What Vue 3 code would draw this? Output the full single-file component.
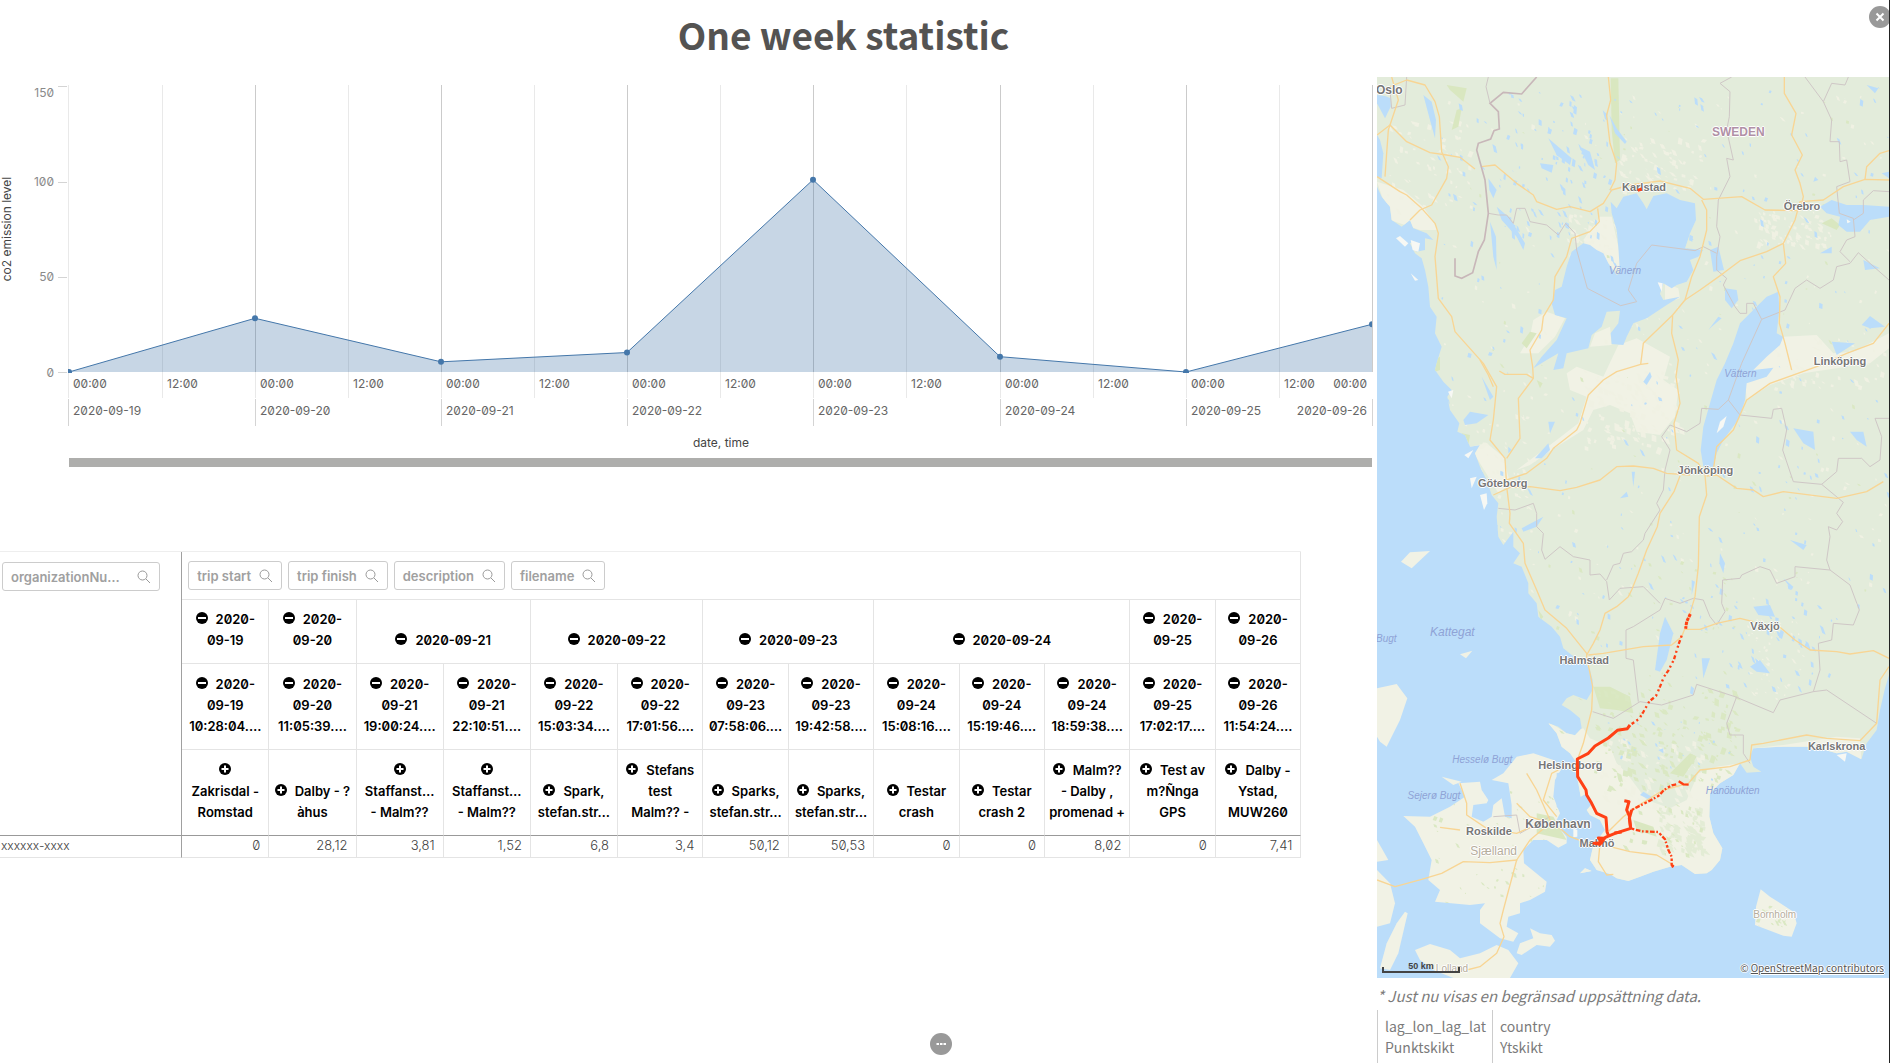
<script setup>
const days = ['19', '20', '21', '22', '23', '24', '25']
const dayX = (i) => (i ? Math.round(69 + i * 186.1) : 68)
const halfX = (i) => 68 + Math.round(i * 186.2 + 93.6)
const valueY = (v) => 295 - v * 1.91
const levels = [0, 28.12, 5.33, 10.2, 100.65, 8.02, 0, 25]
const points = levels.map((v, i) => ({ x: i ? dayX(i) : 69, y: valueY(v) }))
const line = points.map((p) => `${p.x},${p.y}`).join(' ')
const area = `69,295 ${line} 1372,295`
const yTicks = [
  { label: '150', y: 9, text: 20 },
  { label: '100', y: 105, text: 109 },
  { label: '50', y: 200, text: 204 },
  { label: '0', y: 295, text: 300 }
]

const filters = ['trip start', 'trip finish', 'description', 'filename']
const dates = [
  { lines: ['2020-', '09-19'], span: 1 },
  { lines: ['2020-', '09-20'], span: 1 },
  { lines: ['2020-09-21'], span: 2 },
  { lines: ['2020-09-22'], span: 2 },
  { lines: ['2020-09-23'], span: 2 },
  { lines: ['2020-09-24'], span: 3 },
  { lines: ['2020-', '09-25'], span: 1 },
  { lines: ['2020-', '09-26'], span: 1 }
]
const trips = [
  { day: '19', time: '10:28:04', name: ['', 'Zakrisdal -', 'Romstad'], value: '0' },
  { day: '20', time: '11:05:39', name: ['Dalby - ?', 'àhus'], value: '28,12' },
  { day: '21', time: '19:00:24', name: ['', 'Staffanst…', '- Malm??'], value: '3,81' },
  { day: '21', time: '22:10:51', name: ['', 'Staffanst…', '- Malm??'], value: '1,52' },
  { day: '22', time: '15:03:34', name: ['Spark,', 'stefan.str…'], value: '6,8' },
  { day: '22', time: '17:01:56', name: ['Stefans', 'test', 'Malm?? -'], value: '3,4' },
  { day: '23', time: '07:58:06', name: ['Sparks,', 'stefan.str…'], value: '50,12' },
  { day: '23', time: '19:42:58', name: ['Sparks,', 'stefan.str…'], value: '50,53' },
  { day: '24', time: '15:08:16', name: ['Testar', 'crash'], value: '0' },
  { day: '24', time: '15:19:46', name: ['Testar', 'crash 2'], value: '0' },
  { day: '24', time: '18:59:38', name: ['Malm??', '- Dalby ,', 'promenad +'], value: '8,02' },
  { day: '25', time: '17:02:17', name: ['Test av', 'm?Ñnga', 'GPS'], value: '0' },
  { day: '26', time: '11:54:24', name: ['Dalby -', 'Ystad,', 'MUW260'], value: '7,41' }
]

/* Map geometry, in map units of a third of a pixel */
const mainland = '21,21 1557,21 1557,1815 1545,1855 1530,1920 1520,1980 1490,2020 1474,2068 1430,2045 1400,2050 1330,2030 1240,2030 1150,2035 1140,2060 1150,2090 1174,2105 1130,2108 1110,2080 1090,2115 1050,2140 1020,2170 1018,2240 1030,2290 1057,2335 1050,2370 1025,2400 1010,2410 975,2412 935,2385 900,2390 850,2405 810,2420 775,2433 740,2425 720,2412 680,2400 660,2370 668,2335 690,2300 705,2280 690,2250 660,2235 650,2220 668,2200 650,2170 632,2180 625,2140 615,2100 618,2075 600,2050 575,2030 560,1990 535,1960 565,1970 590,1990 615,1996 635,1975 630,1945 600,1920 575,1905 590,1885 610,1875 650,1890 668,1860 668,1830 660,1800 650,1785 605,1755 580,1735 570,1700 545,1670 505,1640 500,1600 475,1570 475,1540 455,1490 430,1480 450,1450 430,1430 430,1385 400,1425 385,1400 380,1340 385,1300 365,1275 350,1230 330,1190 315,1150 330,1125 300,1130 285,1095 262,1085 268,1060 240,1020 232,980 245,960 220,935 195,900 200,880 215,830 195,790 200,740 180,710 175,650 165,600 155,565 135,550 120,520 130,515 140,545 165,540 165,505 190,510 170,490 130,475 120,450 95,470 65,450 60,410 35,380 21,350'
const denmark = [
  '21,1855 80,1842 112,1885 90,1950 50,2030 30,2015 21,2000',
  '100,2238 180,2240 240,2210 285,2180 265,2140 330,2135 335,2160 355,2190 350,2200 310,2205 305,2240 340,2255 365,2240 370,2205 395,2185 405,2240 425,2245 425,2205 415,2140 365,2130 400,2110 440,2060 490,2050 550,2070 575,2095 555,2130 550,2180 570,2230 555,2260 590,2300 590,2320 565,2333 530,2310 490,2310 460,2340 462,2380 530,2435 525,2465 480,2490 450,2500 450,2530 415,2540 410,2570 445,2590 430,2615 390,2605 330,2560 330,2520 345,2500 300,2505 195,2495 210,2460 175,2430 185,2370 160,2320 135,2270',
  '135,2640 180,2622 240,2640 270,2665 330,2650 380,2625 415,2640 445,2680 420,2724 250,2724 190,2700 150,2670',
  '440,2650 450,2620 490,2605 480,2575 510,2590 545,2595 555,2612 540,2630 500,2625 455,2655',
  '21,2310 55,2370 21,2375',
  '21,2400 60,2440 75,2500 60,2560 21,2570',
  '105,2525 113,2530 85,2650 60,2700 30,2695 50,2620 80,2560',
  '1172,2458 1200,2480 1270,2525 1280,2560 1265,2600 1240,2597 1155,2565 1158,2510',
  '93,1475 120,1447 180,1443 125,1495',
  '270,1753 307,1742 288,1765',
  '630,2410 645,2395 665,2403',
  '215,2120 275,2135 250,2145'
]
const cream = [
  '535,1955 590,1990 640,1975 660,2005 720,2030 740,2080 770,2110 830,2190 900,2215 950,2190 985,2110 1040,2090 1110,2080 1100,2450 640,2450 590,2200',
  '745,825 800,805 900,860 880,930 925,960 915,1040 870,1095 800,1085 780,1030 720,1005 670,1020 640,1080 560,1130 480,1185 440,1200 560,1110 625,1060 650,980 600,960 590,910 620,890 700,920',
  '1240,800 1340,795 1390,850 1450,845 1557,790 1557,835 1500,880 1300,910 1200,945 1130,990 1125,930 1160,885',
  '490,750 530,725 585,745 555,800 505,850 450,850 480,800',
  '640,510 690,440 725,440 745,530 755,600 720,600',
  '21,335 100,360 160,410 205,480 150,480 60,450',
  '675,790 720,770 725,825 660,830',
  '300,1130 350,1120 400,1160 420,1240 385,1270 330,1180',
  '885,640 925,655 930,685 885,700',
  '1150,2035 1240,2025 1400,2000 1470,2005 1474,2068 1150,2090'
]
const greens = [
  '260,120 275,115 265,170 245,180', '230,45 290,55 280,95 240,60', '722,25 745,25 750,270 735,280 725,180',
  '1355,460 1385,445 1410,465 1400,480', '190,870 210,860 210,900 195,905', '455,820 480,785 500,790 470,835',
  '670,1850 720,1850 780,1880 790,1930 740,1920 690,1915', '500,2230 550,2240 590,2310 500,2290',
  '790,2250 850,2270 860,2300 800,2280', '900,2110 960,2050 980,2060 940,2120',
  '275,1090 300,1095 295,1125', '500,930 518,940 510,955', '505,1620 520,1640 512,1650'
]
const vanern = '722,395 740,415 760,380 800,370 820,400 830,418 850,378 890,370 930,390 975,400 978,450 960,490 945,535 1000,540 985,560 960,570 970,600 950,635 920,645 905,655 880,640 870,672 880,690 930,680 890,705 830,745 790,760 770,800 760,825 725,822 722,790 745,760 750,722 710,725 695,770 665,795 655,835 590,850 580,895 550,900 565,850 530,870 490,895 515,860 560,810 590,745 555,735 545,700 555,660 575,650 590,590 605,545 640,520 660,525 680,540 700,550 715,580 740,615 750,610 745,530 740,480 725,430'
const vattern = '1225,665 1228,720 1220,790 1240,800 1230,825 1190,860 1150,900 1210,893 1190,920 1130,940 1125,990 1108,1045 1060,1110 1040,1150 1030,1190 1000,1190 992,1140 1000,1070 1020,1000 1040,930 1065,880 1090,820 1110,760 1150,720 1190,680'
const lakes = [
  '21,75 45,78 62,85 62,110 45,145 21,100', '21,195 30,210 40,250 35,325 21,320',
  '160,75 185,95 198,150 195,205 180,150', '1350,410 1385,390 1430,405 1480,405 1557,410 1557,440 1500,450 1470,485 1430,485 1405,465 1410,440 1370,430',
  '535,205 570,235 605,265 600,285 560,255', '510,280 550,285 545,308 515,295', '630,230 660,245 675,300 655,285 640,255',
  '718,135 740,175 770,215 765,222 735,190', '380,410 420,445 465,520 460,540 440,500 395,450', '360,455 378,500 380,600 370,560',
  '355,325 380,360 370,385 358,360', '1020,540 1045,530 1062,600 1030,605', '1065,655 1100,660 1105,690 1085,715 1065,690',
  '1385,815 1455,820 1400,855', '1475,765 1500,738 1545,770 1500,775', '1015,780 1045,740 1055,745 1025,770',
  '1350,550 1385,530 1385,550', '1480,570 1530,595 1485,600', '335,920 370,980 360,990', '280,1050 300,1025 355,1035 320,1060 285,1065',
  '495,1165 535,1120 540,1140 515,1165', '1270,1075 1330,1085 1335,1140 1300,1120', '1440,1085 1480,1085 1490,1130 1460,1110',
  '855,1800 870,1690 885,1640 910,1690 890,1770 870,1805', '1150,1610 1200,1605 1215,1640 1165,1635', '965,1530 975,1535 965,1575',
  '1050,1450 1065,1480 1060,1510 1048,1480', '995,1765 1020,1765 1000,1825', '1140,1790 1170,1770 1200,1810 1160,1805', '1260,1410 1310,1425 1300,1440',
  '455,1375 520,1340 500,1370 460,1385', '820,935 840,905 845,920 830,945', '1490,45 1525,55 1515,70', '415,1130 425,1140 415,1150',
  '820,2165 845,2180 840,2190 810,2175', '865,2040 880,2035 880,2050', '1335,320 1345,330 1330,335', '535,1055 555,1055 540,1090', '785,1205 795,1205 790,1250', '750,1285 770,1265 775,1280',
  '1240,1525 1270,1550 1265,1560', '1535,310 1557,305 1557,325', '560,2110 580,2105 620,2180 615,2270 590,2240 560,2210'
]
const whites = ['1070,1038 1060,1070 1040,1090 1050,1055', '78,505 90,498 115,520 105,530', '122,510 150,520 145,545 128,540', '122,610 145,630 135,632', '283,1155 310,1140 295,1165', '300,1225 320,1220 305,1255', '330,1275 350,1270 352,1300 342,1320', '234,965 250,960 245,985', '610,2275 622,2280 622,2300 610,2302', '1400,2055 1430,2050 1425,2075', '863,637 878,640 875,665', '1430,448 1442,455 1432,460', '738,662 750,665']

/* Small lakes, clearings and woods: a fixed sequence keeps the scatter stable */
let seed = 4711
const rnd = () => {
  seed = (seed * 16807) % 2147483647
  return seed / 2147483647
}
const scatter = (n, x0, y0, x1, y1, size, tall = 1) => {
  let d = ''
  for (let i = 0; i < n; i++) {
    const x = x0 + rnd() * (x1 - x0)
    const y = y0 + rnd() * (y1 - y0)
    const a = size * (0.4 + rnd())
    const b = a * tall * (0.6 + rnd())
    const s = (rnd() * 1.6 - 0.6) * a
    d += `M${x.toFixed(0)} ${y.toFixed(0)}l${a.toFixed(0)} ${(b / 3).toFixed(0)}l${s.toFixed(0)} ${b.toFixed(0)}l${(-a).toFixed(0)} ${(-b / 4).toFixed(0)}z`
  }
  return d
}
const smallLakes = scatter(280, 180, 25, 1550, 1740, 7, 1.4) + scatter(80, 380, 60, 720, 500, 7, 1.7) + scatter(50, 950, 1560, 1400, 1850, 7, 1.5) + scatter(24, 700, 1950, 1100, 2200, 6)
const clearings = scatter(70, 740, 200, 1000, 360, 9) + scatter(80, 1150, 420, 1380, 530, 9) + scatter(120, 640, 900, 930, 1130, 11) + scatter(60, 30, 150, 300, 420, 9) + scatter(60, 250, 1050, 480, 1500, 9) + scatter(220, 200, 60, 1550, 1700, 7) + scatter(60, 590, 430, 740, 560, 9) + scatter(50, 1200, 800, 1557, 960, 9) + scatter(60, 690, 2000, 1000, 2200, 12) + scatter(50, 1130, 1640, 1300, 1900, 6)
const woods = scatter(70, 380, 1450, 1100, 2100, 7) + scatter(150, 670, 1850, 1100, 2160, 11) + scatter(30, 750, 2200, 1000, 2350, 9) + scatter(60, 180, 2160, 560, 2500, 7) + scatter(20, 1160, 2500, 1250, 2570, 7) + scatter(60, 300, 50, 1500, 1600, 6)
const ridge = scatter(100, 860, 2210, 1000, 2340, 12)

const roads = [
  '21,195 60,165 110,215 180,248 230,255 270,262 315,297', '65,21 85,90 55,180 45,320', '60,50 110,30 165,45 195,95 208,140 215,245 235,290 230,325 185,405 150,420 120,450',
  '21,320 90,365 110,375 155,415 195,460 205,490 195,560 205,685 245,740 255,785 295,830 340,880 380,950 370,1050 360,1110 405,1165 410,1250 420,1330 418,1360 460,1420 465,1480 500,1560 525,1620 590,1675 650,1750 650,1760 668,1850 665,1920 640,2020 622,2070',
  '335,290 375,285 440,340 490,375 500,395 560,418 600,410 660,425 700,400 725,360 780,345 870,333 960,355 1000,388 1115,380 1185,420 1290,422 1300,380 1290,340 1275,300 1297,255 1265,195 1278,130 1243,70 1243,21',
  '715,21 722,90 710,135 720,220 740,280 735,330 720,360', '683,415 688,455 660,485 605,505 590,560 555,620 550,690 520,740 515,780 480,840 488,890 490,925 445,985 450,1105 410,1165',
  '995,390 1010,420 1010,480 990,560 965,620 945,690 908,735 905,790 925,870 918,920 930,1000 912,1060 920,1140 985,1180 1005,1215 1010,1275 988,1340 985,1490 975,1580 960,1630 945,1675 935,1700 905,1725 820,1730 700,1750 655,1755',
  '945,690 990,660 1060,610 1110,572 1190,545 1240,520 1275,450 1290,395 1360,390 1420,350 1485,328 1557,330', '1485,328 1490,290 1530,250 1557,242', '1240,520 1247,580 1210,620 1230,680 1228,760 1245,820 1265,900',
  '908,735 820,820 812,883 740,905 700,930 655,975 630,1060 620,1080 550,1135 530,1165 470,1210 410,1230', '812,883 835,880', '1557,760 1510,820 1430,850 1340,890 1200,940 1130,990 1090,1080 1040,1130 1030,1200',
  '370,1275 420,1252 480,1250 570,1262 620,1252 690,1230 740,1190 790,1188 850,1195 890,1210 960,1215', '930,1218 912,1265 870,1330 862,1370 830,1440 805,1510 785,1560 775,1580 740,1610 705,1630 690,1680 670,1720 650,1755',
  '1010,1218 1040,1215 1100,1255 1150,1260 1180,1280 1240,1265 1400,1285 1490,1265 1540,1235', '945,1678 990,1678 1040,1660 1110,1645 1150,1655', '1230,1672 1275,1710 1320,1740 1400,1745 1440,1752 1510,1742 1557,1765',
  '955,2140 990,2100 1080,2090 1140,2070 1145,2025 1180,2020 1310,1995 1370,2005 1470,2012 1520,1960 1530,1830 1557,1790', '710,2290 760,2240 800,2210 880,2160 955,2140',
  '720,2330 780,2345 860,2355 910,2385', '690,2320 685,2375 710,2415 730,2413', '690,2320 640,2315 600,2300 540,2250 500,2160 470,2110', '560,2240 520,2190 545,2110 565,2100', '540,2260 480,2240 440,2200', '270,2140 290,2200 290,2235 350,2275 440,2290 530,2250', '210,2272 270,2280',
  '21,2430 75,2450 155,2428 215,2410 280,2375 360,2378 440,2370 480,2310 540,2260', '440,2370 400,2520 390,2560 402,2600 380,2650 330,2690 290,2700', '388,903 405,913 470,913 490,925', '330,870 355,915 370,950'
]
const counties = [
  '1085,21 1050,40 1080,65 1078,140 1070,180 1090,270 1070,265 1080,320 1045,390 1040,470 1050,500 1040,560 1040,600 1070,625 1060,645 1095,710 1110,730 1130,730 1130,700 1150,700 1175,748 1245,720 1275,655 1310,630 1350,655 1390,630 1400,590 1440,580 1465,548 1500,580 1557,630',
  '1305,21 1360,95 1385,150 1380,215 1408,215 1410,275 1430,270 1440,335 1400,350 1408,430 1450,445 1455,500 1430,510 1410,545 1440,575', '1360,95 1385,40 1425,45 1435,21', '1450,450 1480,430 1480,390 1510,362 1557,365',
  '355,430 385,435 410,435 430,460 440,415 465,415 480,455 530,465 565,495 587,460 615,490 620,540 652,655 752,707 800,695 775,660 800,580 845,525 975,542 1000,530 1040,550',
  '1175,748 1115,880 1075,990 1045,1018 995,1015 990,1060 950,1085 900,1065 875,1100 900,1140 885,1200 880,1260 860,1300 870,1320 825,1390 820,1410 785,1445 760,1450 750,1480 730,1485 710,1530',
  '1075,990 1110,1035 1205,1045 1210,1018 1235,1015 1250,1080 1238,1140 1270,1235 1355,1243 1420,1297 1400,1330 1418,1355 1400,1380 1375,1370 1380,1400 1370,1470 1380,1500 1275,1490 1275,1520 1220,1540 1200,1500 1170,1490 1115,1515 1110,1525 1058,1530 1055,1600 1065,1625 1040,1665 1020,1640 1000,1590 970,1585 930,1600 885,1585 870,1620 790,1670 768,1680 768,1765 790,1770 805,1895',
  '385,1315 435,1320 490,1300 500,1330 500,1370 520,1390 515,1440 525,1468 570,1430 610,1460 660,1470 660,1515 690,1512 710,1535 718,1590 750,1555 820,1550 870,1600',
  '1380,1500 1440,1545 1468,1620 1450,1665 1390,1660 1385,1710 1345,1720 1350,1800 1330,1865', '1557,1045 1515,1045 1535,1100 1530,1170 1500,1190 1475,1165 1405,1165 1400,1205 1355,1243',
  '668,1925 730,1945 810,1895 875,1905 970,1875 980,1843 1095,1880 1210,1928 1230,1890 1330,1865 1370,1860 1520,1960', '1100,1880 1070,1960 1080,1995 1120,1995 1120,2050 1140,2080',
  '110,21 105,105 65,115 60,60', '370,2240 440,2235 450,2290 540,2240'
]
const frontier = '500,21 455,72 400,67 360,100 385,125 388,177 372,182 362,207 325,220 320,240 345,330 355,430 343,510 325,545 308,608 275,625 255,618 255,565'
const frontierNorth = '355,21 348,50 360,100'

const labels = [
  { t: 'Oslo', x: 58, y: 60, k: 'city large' },
  { t: 'SWEDEN', x: 1105, y: 187, k: 'country large' },
  { t: 'Karlstad', x: 822, y: 352, k: 'city' },
  { t: 'Örebro', x: 1296, y: 408, k: 'city' },
  { t: 'Vänern', x: 765, y: 604, k: 'water' },
  { t: 'Linköping', x: 1410, y: 873, k: 'city' },
  { t: 'Vättern', x: 1111, y: 913, k: 'water' },
  { t: 'Jönköping', x: 1006, y: 1201, k: 'city' },
  { t: 'Göteborg', x: 398, y: 1240, k: 'city' },
  { t: 'Växjö', x: 1185, y: 1667, k: 'city' },
  { t: 'Kattegat', x: 247, y: 1687, k: 'water large' },
  { t: 'Bugt', x: 49, y: 1706, k: 'water' },
  { t: 'Halmstad', x: 643, y: 1770, k: 'city' },
  { t: 'Karlskrona', x: 1400, y: 2027, k: 'city' },
  { t: 'Hesselø Bugt', x: 337, y: 2071, k: 'water' },
  { t: 'Helsingborg', x: 601, y: 2085, k: 'city' },
  { t: 'Hanöbukten', x: 1088, y: 2164, k: 'water' },
  { t: 'Sejerø Bugt', x: 192, y: 2179, k: 'water' },
  { t: 'København', x: 564, y: 2263, k: 'city large' },
  { t: 'Roskilde', x: 357, y: 2284, k: 'city' },
  { t: 'Malmö', x: 681, y: 2319, k: 'city' },
  { t: 'Sjælland', x: 371, y: 2344, k: 'island large' },
  { t: 'Bornholm', x: 1214, y: 2534, k: 'island' },
  { t: 'Lolland', x: 246, y: 2698, k: 'island' }
]
const place = (l) => ({ left: `${((l.x - 21) / 1536) * 100}%`, top: `${((l.y - 21) / 2703) * 100}%` })
</script>

<template>
  <main class="page">
    <header class="top">
      <h1>One week statistic</h1>
      <button class="round close" type="button" aria-label="Close">
        <svg width="22" height="22" viewBox="0 0 22 22"><path d="M7.5 7.5l7 7M14.5 7.5l-7 7" stroke="#fff" stroke-width="2" /></svg>
      </button>
    </header>

    <div class="content">
      <section class="left">
        <svg class="chart" viewBox="0 0 1377 400" role="img" aria-label="co2 emission level by date and time">
          <defs><clipPath id="plot"><rect x="68" y="0" width="1304" height="296" /></clipPath></defs>
          <g class="minor">
            <path v-for="(d, i) in days" :key="d" :d="`M${halfX(i)} 8V321`" />
            <path v-for="(d, i) in days" :key="'a' + d" :d="`M${dayX(i)} 295V321`" />
            <path d="M68 8V321" />
          </g>
          <g class="major">
            <path v-for="i in 7" :key="i" :d="`M${dayX(i)} 8V295`" />
          </g>
          <g class="tick">
            <path v-for="i in 8" :key="i" :d="`M${dayX(i - 1)} 322V349`" />
            <path v-for="t in yTicks" :key="t.label" :d="`M58 ${t.y}H67`" />
          </g>
          <g clip-path="url(#plot)">
            <polygon class="area" :points="area" />
            <polyline class="line" :points="line" />
            <circle v-for="p in points" :key="p.x" class="dot" :cx="p.x" :cy="p.y" r="3" />
          </g>
          <g class="ylabel">
            <text v-for="t in yTicks" :key="t.label" x="54" :y="t.text">{{ t.label }}</text>
          </g>
          <g class="xlabel">
            <template v-for="(d, i) in days" :key="d">
              <text :x="dayX(i) + 5" y="311">00:00</text>
              <text :x="halfX(i) + 5" y="311">12:00</text>
              <text :x="dayX(i) + 5" y="338">2020-09-{{ d }}</text>
            </template>
            <text class="end" x="1367" y="311">00:00</text>
            <text class="end" x="1367" y="338">2020-09-26</text>
          </g>
          <text class="axis" x="721" y="370">date, time</text>
          <text class="axis" transform="translate(11 152) rotate(-90)">co2 emission level</text>
          <rect x="69" y="381" width="1303" height="9" fill="#aeaeac" />
        </svg>

        <table class="pivot">
          <colgroup><col class="org" /><col v-for="(t, i) in trips" :key="i" :class="{ early: i < 5 }" /></colgroup>
          <thead>
            <tr class="bar">
              <th class="side" rowspan="4">
                <button type="button" class="filter wide">
                  organizationNu…
                  <svg width="14" height="14" viewBox="0 0 14 14"><circle cx="5.5" cy="5.5" r="4.5" /><path d="M9 9l4 4" /></svg>
                </button>
              </th>
              <th :colspan="trips.length">
                <div class="filters">
                  <button v-for="f in filters" :key="f" type="button" class="filter">
                    {{ f }}
                    <svg width="14" height="14" viewBox="0 0 14 14"><circle cx="5.5" cy="5.5" r="4.5" /><path d="M9 9l4 4" /></svg>
                  </button>
                </div>
              </th>
            </tr>
            <tr class="date">
              <th v-for="(d, i) in dates" :key="i" :colspan="d.span">
                <button type="button" class="fold" aria-label="Collapse"><svg width="12" height="12" viewBox="0 0 12 12"><circle cx="6" cy="6" r="6" /><path d="M2 6h8" /></svg></button><template v-for="(l, n) in d.lines" :key="n"><br v-if="n" />{{ l }}</template>
              </th>
            </tr>
            <tr class="time">
              <th v-for="(t, i) in trips" :key="i">
                <button type="button" class="fold" aria-label="Collapse"><svg width="12" height="12" viewBox="0 0 12 12"><circle cx="6" cy="6" r="6" /><path d="M2 6h8" /></svg></button>2020-<br />09-{{ t.day }}<br />{{ t.time }}.…
              </th>
            </tr>
            <tr class="name">
              <th v-for="(t, i) in trips" :key="i">
                <button type="button" class="fold" :class="{ alone: !t.name[0] }" aria-label="Expand"><svg width="12" height="12" viewBox="0 0 12 12"><circle cx="6" cy="6" r="6" /><path d="M2.500 6h7M6 2.500v7" /></svg></button><template v-for="(l, n) in t.name" :key="n"><br v-if="n" />{{ l }}</template>
              </th>
            </tr>
          </thead>
          <tbody>
            <tr>
              <th class="org-name" scope="row">xxxxxx-xxxx</th>
              <td v-for="(t, i) in trips" :key="i">{{ t.value }}</td>
            </tr>
          </tbody>
        </table>
      </section>

      <aside class="right">
        <div class="map">
          <svg class="land" viewBox="21 21 1536 2703">
            <defs><clipPath id="shore"><polygon :points="mainland" /><polygon v-for="p in denmark" :key="p" :points="p" /></clipPath></defs>
            <rect x="21" y="21" width="1536" height="2703" fill="#bbddfa" />
            <polygon :points="mainland" fill="#e3ecdb" />
            <polygon v-for="p in denmark" :key="p" :points="p" fill="#f1f2e5" />
            <g clip-path="url(#shore)">
              <polygon v-for="p in cream" :key="p" :points="p" fill="#f1f2e5" />
              <path :d="clearings" fill="#f0f1e3" />
              <path :d="ridge" fill="#e3ecd5" />
              <polygon v-for="p in greens" :key="p" :points="p" fill="#d9e7c0" />
              <path :d="woods" fill="#dae8c3" />
              <path :d="smallLakes" fill="#bbddfa" />
            </g>
            <g fill="#bbddfa">
              <polygon :points="vanern" />
              <polygon :points="vattern" />
              <polygon v-for="p in lakes" :key="p" :points="p" />
            </g>
            <polygon v-for="p in whites" :key="p" :points="p" fill="#f7f8f4" />
            <polyline v-for="p in counties" :key="p" :points="p" class="county" />
            <polyline v-for="p in roads" :key="p" :points="p" class="road" />
            <polyline :points="frontier" class="frontier" />
            <polyline :points="frontierNorth" class="county" />
          </svg>
          <span v-for="l in labels" :key="l.t" class="label" :class="l.k" :style="place(l)">{{ l.t }}</span>
          <svg class="land tracks" viewBox="21 21 1536 2703">
            <polyline points="803,361 815,357" />
            <polyline points="780,1965 772,1976 742,1981 715,2004 675,2028 655,2050 622,2067 623,2120 648,2160 650,2175 665,2200 680,2230 708,2243 711,2285 716,2298 700,2305 685,2304 695,2318 672,2320 690,2323 706,2302 735,2290 782,2275 778,2238 770,2220 777,2195 763,2192" />
            <polyline points="782,2275 778,2245 785,2220" />
            <polyline points="733,2289 755,2286" />
            <polyline class="dots" points="785,2220 800,2212 840,2192 868,2176 882,2160 905,2146 920,2143" />
            <polyline class="thin" points="926,2134 940,2143 956,2144" />
            <polyline class="dots" points="785,2276 815,2284 865,2286 885,2308 895,2340 905,2360 905,2385 911,2391" />
            <polyline points="906,2387 911,2390" />
            <polyline points="961,1632 950,1655 947,1676" stroke-dasharray="10 3" />
            <polyline class="dots far" points="935,1697 926,1722 912,1768 895,1802 882,1820 870,1850 858,1878 838,1894 820,1926 808,1946 785,1962" />
          </svg>
          <div class="scale"><span>50 km</span></div>
          <div class="credit">© <a href="#">OpenStreetMap contributors</a></div>
        </div>
        <p class="note">* Just nu visas en begränsad uppsättning data.</p>
        <ul class="legend">
          <li>lag_lon_lag_lat<br />Punktskikt</li>
          <li>country<br />Ytskikt</li>
        </ul>
      </aside>
    </div>

    <button class="round more" type="button" aria-label="More">
      <svg width="22" height="22" viewBox="0 0 22 22"><path d="M6.500 11h2.500M10 11h2.500M13.500 11h2.500" stroke="#fff" stroke-width="2" /></svg>
    </button>
  </main>
</template>

<style>
body {
  margin: 0;
  background: #fff;
}
</style>

<style scoped>
.page {
  position: relative;
  box-sizing: border-box;
  min-height: 100vh;
  border-right: 1px solid #222;
  overflow: hidden;
  font-family: "Noto Sans CJK SC", sans-serif;
}
.top {
  height: 77px;
  padding-right: 202px;
}
h1 {
  margin: 0;
  color: #545352;
  font-size: 37px;
  font-weight: 700;
  line-height: 68px;
  text-align: center;
}
.round {
  position: absolute;
  width: 22px;
  height: 22px;
  padding: 0;
  border: 0;
  border-radius: 50%;
  background: #999;
}
.round svg {
  display: block;
}
.close {
  top: 6px;
  right: -2px;
}
.more {
  bottom: 8px;
  left: calc(50% - 15px);
}
.content {
  display: grid;
  grid-template-columns: minmax(0, 1377fr) minmax(0, 512fr);
}
.chart {
  display: block;
  width: 100%;
  height: auto;
  font-family: Inter, sans-serif;
  font-size: 12px;
  font-feature-settings: "zero";
}
.minor path,
.major path,
.tick path {
  shape-rendering: crispEdges;
}
.minor path {
  stroke: #e9e9e9;
}
.major path {
  stroke: #cbcbcb;
}
.tick path {
  stroke: #d4d4d4;
}
.area {
  fill: #4477aa;
  fill-opacity: 0.3;
}
.line {
  fill: none;
  stroke: #4477aa;
}
.dot {
  fill: #4477aa;
}
.ylabel text {
  fill: #8a8a8a;
  text-anchor: end;
}
.xlabel text {
  fill: #666;
}
.xlabel .end {
  text-anchor: end;
}
.axis {
  fill: #444;
  text-anchor: middle;
}
.pivot {
  width: 94.5%;
  margin-top: 74px;
  table-layout: fixed;
  border-spacing: 0;
  border-top: 1px solid #eee;
  font-family: Inter, sans-serif;
  font-size: 13px;
  font-feature-settings: "zero";
  line-height: 21px;
}
.org {
  width: 14%;
}
.early {
  width: 6.7%;
}
.pivot th,
.pivot td {
  box-sizing: border-box;
  padding: 0;
  border-right: 1px solid #e4e4e4;
  border-bottom: 1px solid #e4e4e4;
  white-space: nowrap;
}
.pivot .side {
  padding: 10px 2px;
  border-right: 1px solid #a0a0a0;
  border-bottom-color: #999;
  text-align: left;
  vertical-align: top;
}
.bar {
  height: 48px;
}
.date {
  height: 64px;
}
.time,
.name {
  height: 86px;
}
.date th,
.time th,
.name th {
  padding-bottom: 12px;
  color: #000;
  font-weight: 600;
  vertical-align: bottom;
}
.name th {
  border-bottom-color: #999;
}
.filters {
  display: flex;
  gap: 6px;
  padding-left: 6px;
}
.filter {
  display: flex;
  align-items: center;
  justify-content: space-between;
  gap: 8px;
  box-sizing: border-box;
  height: 29px;
  padding: 0 8px;
  border: 1px solid #ccc;
  border-radius: 3px;
  background: #fff;
  color: #a0a0a0;
  font-family: inherit;
  font-size: 13px;
  font-weight: 600;
}
.filter svg {
  fill: none;
  stroke: #999;
}
.wide {
  width: 158px;
}
.fold {
  margin: 0 8px 0 0;
  padding: 0;
  border: 0;
  background: none;
}
.alone {
  margin: 0;
}
.fold svg {
  display: block;
  stroke: #fff;
  stroke-width: 2;
}
.fold circle {
  fill: #000;
  stroke: none;
}
.pivot td,
.pivot .org-name {
  height: 22px;
  color: #404040;
  font-weight: 300;
  line-height: 19px;
  vertical-align: top;
}
.pivot td {
  padding-right: 8px;
  text-align: right;
}
.pivot .org-name {
  padding-left: 1px;
  border-right-color: #a0a0a0;
  font-size: 12px;
  text-align: left;
}
.map {
  position: relative;
  overflow: hidden;
}
.land {
  display: block;
  width: 100%;
  height: auto;
}
.road {
  fill: none;
  stroke: #f8d594;
  stroke-width: 4;
  stroke-linejoin: round;
}
.county {
  fill: none;
  stroke: #cfc7c6;
  stroke-width: 3;
}
.frontier {
  fill: none;
  stroke: #c8b7b9;
  stroke-width: 5;
}
.tracks {
  position: absolute;
  top: 0;
  left: 0;
}
.tracks polyline {
  fill: none;
  stroke: #ff4015;
  stroke-width: 9;
  stroke-linejoin: round;
}
.tracks .thin {
  stroke-width: 7;
}
.tracks .dots {
  stroke-width: 7;
  stroke-dasharray: 8 5 14 5 5 6;
}
.tracks .far {
  stroke-dasharray: 6 8 12 6 6 10;
}
.label {
  position: absolute;
  transform: translate(-50%, -50%);
  font-family: "Liberation Sans", sans-serif;
  font-size: 11px;
  line-height: 14px;
  text-shadow: 1px 0 #fff, -1px 0 #fff, 0 1px #fff, 0 -1px #fff;
  white-space: nowrap;
}
.city {
  color: #777;
  font-weight: 700;
}
.country {
  color: #b090a6;
  font-weight: 700;
}
.water {
  color: #8fa3d6;
  font-size: 10px;
  font-style: italic;
  text-shadow: none;
}
.island {
  color: #b5ad9c;
  font-size: 10px;
}
.large {
  font-size: 12px;
}
.scale {
  position: absolute;
  bottom: 5px;
  left: 5px;
  box-sizing: border-box;
  width: 78px;
  height: 6px;
  border: 2px solid #444;
  border-top: 0;
}
.scale span {
  position: absolute;
  right: 0;
  bottom: 0;
  left: 0;
  color: #444;
  font-family: "Liberation Sans", sans-serif;
  font-size: 9px;
  font-weight: 700;
  line-height: 10px;
  text-align: center;
}
.credit {
  position: absolute;
  right: 5px;
  bottom: 2px;
  color: #555;
  font-size: 10px;
  line-height: 16px;
  text-shadow: 1px 0 #fff, -1px 0 #fff, 0 1px #fff, 0 -1px #fff;
}
.credit a {
  color: inherit;
}
.note {
  margin: 7px 0 4px;
  color: #7b7b7b;
  font-size: 15px;
  font-style: italic;
  line-height: 21px;
  white-space: nowrap;
}
.legend {
  display: flex;
  margin: 0;
  padding: 0;
  color: #7b7b7b;
  font-size: 14px;
  line-height: 21px;
  list-style: none;
}
.legend li {
  padding: 6px 6px 5px 7px;
  border-left: 1px solid #ccc;
}
</style>
